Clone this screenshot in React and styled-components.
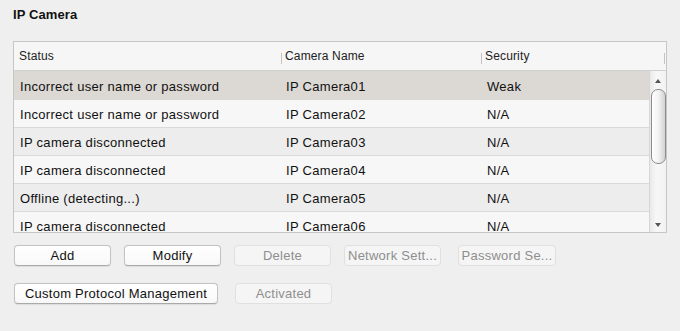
import React from "react";
import styled, { createGlobalStyle } from "styled-components";

const Global = createGlobalStyle`
  html, body { margin: 0; padding: 0; background: #efefef; }
  body { font-family: "Liberation Sans", Arial, sans-serif; color: #1a1a1a; }
`;

const Page = styled.div`
  width: 680px;
  height: 331px;
  padding: 7px 13px 0 13px;
  box-sizing: border-box;
  display: flex;
  flex-direction: column;
`;

const Title = styled.div`
  font-size: 13px;
  font-weight: bold;
  line-height: 15px;
  height: 15px;
  color: #111;
  letter-spacing: 0.1px;
`;

const Table = styled.div`
  margin-top: 19px;
  width: 654px;
  height: 192px;
  box-sizing: border-box;
  border: 1px solid #c6c6c6;
  background: #f6f6f6;
  display: flex;
  flex-direction: column;
  overflow: hidden;
`;

const HeaderRow = styled.div`
  display: flex;
  height: 29px;
  box-sizing: border-box;
  border-bottom: 1px solid #d0d0d0;
  background: #f6f6f6;
  font-size: 12px;
  flex-shrink: 0;
`;

const HeaderCell = styled.div`
  width: ${(p) => p.$w}px;
  flex: ${(p) => (p.$w ? "none" : "1")};
  display: flex;
  align-items: center;
  box-sizing: border-box;
  padding-left: ${(p) => (p.$sep ? 4 : 5)}px;
  position: relative;
  color: #222;
  letter-spacing: 0.15px;
  &::before {
    content: "";
    display: ${(p) => (p.$sep ? "block" : "none")};
    position: absolute;
    left: 0;
    top: 11px;
    height: 11px;
    width: 1px;
    background: #c4c4c4;
  }
`;

const EndSep = styled.div`
  width: 2px;
  display: flex;
  align-items: center;
  &::before {
    content: "";
    width: 1px;
    height: 11px;
    margin-top: 5px;
    background: #c4c4c4;
  }
`;

const Body = styled.div`
  flex: 1;
  display: flex;
  min-height: 0;
`;

const Rows = styled.div`
  flex: 1;
  overflow: hidden;
`;

const Row = styled.div`
  display: flex;
  height: 28px;
  box-sizing: border-box;
  border-top: 1px solid ${(p) => (p.$first ? "transparent" : "#dadada")};
  background: ${(p) => (p.$sel ? "#dcd8d3" : p.$odd ? "#ededed" : "#f7f7f7")};
  font-size: 13px;
  letter-spacing: 0.3px;
`;

const Cell = styled.div`
  width: ${(p) => p.$w}px;
  flex: ${(p) => (p.$w ? "none" : "1")};
  display: flex;
  align-items: center;
  padding-left: ${(p) => p.$pl}px;
  padding-top: 1px;
  box-sizing: border-box;
  white-space: nowrap;
  color: #111;
`;

const Scroll = styled.div`
  width: 17px;
  flex-shrink: 0;
  box-sizing: border-box;
  border-left: 1px solid #d6d6d6;
  background: linear-gradient(to right, #e9e9e9, #f7f7f7 40%, #f2f2f2);
  display: flex;
  flex-direction: column;
  align-items: center;
`;

const Arrow = styled.div`
  width: 0;
  height: 0;
  border-left: 3px solid transparent;
  border-right: 3px solid transparent;
  ${(p) =>
    p.$down
      ? `border-top: 4px solid #555; margin-top: auto; margin-bottom: 5px;`
      : `border-bottom: 4px solid #555; margin-top: 8px;`}
`;

const Thumb = styled.div`
  margin-top: 6px;
  width: 15px;
  height: 75px;
  box-sizing: border-box;
  border: 1px solid #8c8c8c;
  border-radius: 7px;
  background: linear-gradient(to right, #ffffff, #f2f2f2 50%, #d2d2d2);
`;

const Buttons = styled.div`
  display: flex;
  gap: 13px;
  margin-top: ${(p) => p.$mt}px;
  padding-left: 1px;
`;

const Button = styled.div`
  width: ${(p) => p.$w || 97}px;
  height: 21px;
  box-sizing: border-box;
  margin-left: ${(p) => p.$ml || 0}px;
  border-radius: 4px;
  display: flex;
  align-items: center;
  justify-content: center;
  font-size: 13px;
  letter-spacing: 0.25px;
  white-space: nowrap;
  overflow: hidden;
  ${(p) =>
    p.$disabled
      ? `
    background: #f5f5f5;
    border: 1px solid #e0e0e0;
    color: #8e8e8e;
  `
      : `
    background: linear-gradient(#ffffff, #f8f8f8);
    border: 1px solid #c3c3c3;
    border-bottom-color: #a9a9a9;
    color: #111;
    box-shadow: 0 0.5px 1px rgba(0,0,0,0.08);
  `}
`;

const rows = [
  ["Incorrect user name or password", "IP Camera01", "Weak"],
  ["Incorrect user name or password", "IP Camera02", "N/A"],
  ["IP camera disconnected", "IP Camera03", "N/A"],
  ["IP camera disconnected", "IP Camera04", "N/A"],
  ["Offline (detecting...)", "IP Camera05", "N/A"],
  ["IP camera disconnected", "IP Camera06", "N/A"],
];

export default function App() {
  return (
    <Page>
      <Global />
      <Title>IP Camera</Title>
      <Table>
        <HeaderRow>
          <HeaderCell $w={267}>Status</HeaderCell>
          <HeaderCell $w={200} $sep>Camera Name</HeaderCell>
          <HeaderCell $sep>Security</HeaderCell>
          <EndSep />
        </HeaderRow>
        <Body>
          <Rows>
            {rows.map((r, i) => (
              <Row key={i} $first={i === 0} $sel={i === 0} $odd={i % 2 === 0}>
                <Cell $w={267} $pl={6}>{r[0]}</Cell>
                <Cell $w={200} $pl={5}>{r[1]}</Cell>
                <Cell $pl={6}>{r[2]}</Cell>
              </Row>
            ))}
          </Rows>
          <Scroll>
            <Arrow />
            <Thumb />
            <Arrow $down />
          </Scroll>
        </Body>
      </Table>
      <Buttons $mt={12}>
        <Button>Add</Button>
        <Button>Modify</Button>
        <Button $disabled>Delete</Button>
        <Button $disabled>Network Sett...</Button>
        <Button $disabled $ml={4} $w={98}>Password Se...</Button>
      </Buttons>
      <Buttons $mt={17}>
        <Button $w={204}>Custom Protocol Management</Button>
        <Button $disabled $w={97} $ml={4}>Activated</Button>
      </Buttons>
    </Page>
  );
}
